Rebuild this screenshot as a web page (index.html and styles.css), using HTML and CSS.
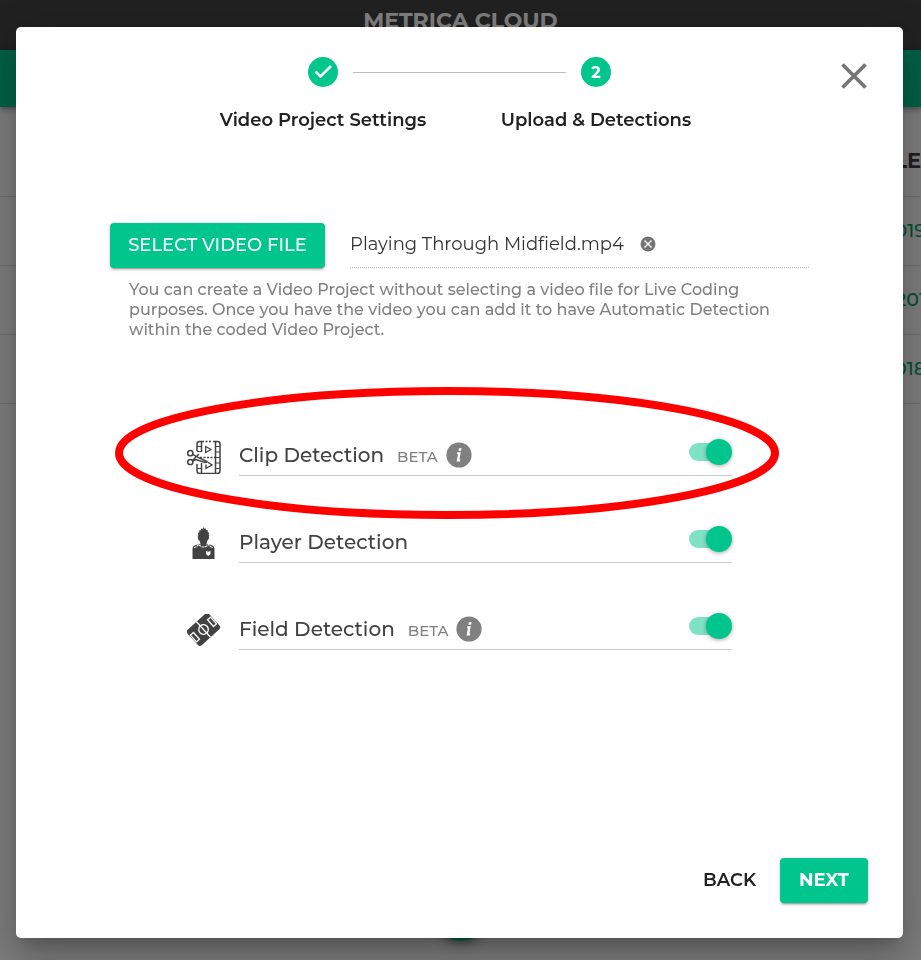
FILE: index.html
```html
<!DOCTYPE html>
<html lang="en">
<head>
<meta charset="utf-8">
<meta name="viewport" content="width=device-width, initial-scale=1">
<title>Metrica Cloud</title>
<link rel="stylesheet" href="styles.css">
</head>
<body>
<div class="page">
  <header class="brand">METRICA CLOUD</header>
  <div class="toolbar"></div>
  <table class="projects">
    <thead><tr><th>LE</th></tr></thead>
    <tbody>
      <tr><td>019</td></tr>
      <tr><td>201</td></tr>
      <tr><td>018</td></tr>
    </tbody>
  </table>
  <div class="page-foot"><span class="fab"></span></div>
</div>

<div class="overlay">
  <section class="dialog" role="dialog" aria-modal="true">
    <button class="close" type="button" aria-label="Close">
      <svg viewBox="0 0 28 28" width="28" height="28"><path d="M2.500 2.500l23 23M25.500 2.500l-23 23" stroke="#757575" stroke-width="3.800"/></svg>
    </button>

    <ol class="stepper">
      <li class="step">
        <span class="dot"><svg viewBox="0 0 30 30" width="30" height="30"><path d="M7.500 14.500l5 5L23 9" fill="none" stroke="#fff" stroke-width="2.500"/></svg></span>
        <span class="step-label">Video Project Settings</span>
      </li>
      <li class="step">
        <span class="dot">2</span>
        <span class="step-label">Upload &amp; Detections</span>
      </li>
    </ol>

    <div class="upload">
      <div class="file-row">
        <button class="btn btn-select" type="button">SELECT VIDEO FILE</button>
        <div class="file">
          <span class="file-name">Playing Through Midfield.mp4</span>
          <button class="clear" type="button" aria-label="Remove file">
            <svg viewBox="0 0 16 16" width="16" height="16"><circle cx="8" cy="8" r="7.500" fill="#757575"/><path d="M4.500 4.500l7 7M11.500 4.500l-7 7" stroke="#fff" stroke-width="1.300"/></svg>
          </button>
        </div>
      </div>
      <p class="help">You can create a Video Project without selecting a video file for Live Coding purposes. Once you have the video you can add it to have Automatic Detection within the coded Video Project.</p>
    </div>

    <div class="detections">
      <div class="detection">
        <svg class="icon" viewBox="0 0 34 34" width="34" height="34" fill="none" stroke="#424242" stroke-width="1.500">
          <path d="M10 11V4q0-2.500 2.500-2.500H17M26 1.500h4.500Q33 1.500 33 4v27q0 2.500-2.500 2.500h-18Q10 33.500 10 31v-7M14.500 2v10M14.500 23v10M28.500 2v31"/>
          <path d="M18.500 1.500H25" stroke-dasharray="2 1.500"/>
          <path d="M10 6.500h4.500M10 11.500h4.500M10 28.500h4.500M28.500 6.500H33M28.500 12H33M28.500 17.500H33M28.500 23H33M28.500 28.500H33" stroke-width="1.200"/>
          <path d="M13 17.500h15" stroke-dasharray="2 1.500"/>
          <path d="M18.700 6.500v6l5.300-3zM19 24.500v3.800l6-3.300-4.500-3" stroke-width="1.300"/>
          <circle cx="3.300" cy="13.200" r="2.600"/><circle cx="3.300" cy="22" r="2.600"/>
          <path d="M5.700 14.400L10 17l10 4.500q0 1-2 1L9 19.500l-3.500 1.700M5.900 20L12 14" stroke-width="1.400"/>
        </svg>
        <div class="field">
          <label for="clip">Clip Detection</label><span class="beta">BETA</span>
          <svg class="info" viewBox="0 0 26 26" width="26" height="26"><circle cx="13" cy="13" r="12.600" fill="#808080"/><path d="M13 6.300h2.600l-.5 2.500h-2.600zM11.300 10.300h3.500l-1.400 7.200h1l-.4 2h-3.400l1.400-7.200H11z" fill="#fff"/></svg>
          <input class="switch" id="clip" type="checkbox" checked>
        </div>
        <svg class="highlight" viewBox="0 0 664 132" width="664" height="132"><ellipse cx="332" cy="66" rx="328" ry="62" fill="none" stroke="#f00" stroke-width="8"/></svg>
      </div>

      <div class="detection">
        <svg class="icon" viewBox="0 0 34 34" width="34" height="34">
          <path d="M16.500 0l1 1.900 1.400-.7.300 1.800 1.700.3-.3 1.700 1.700.9-.7 1.700.9 1.300-.9.800.6.500q-.3 2.500-1.600 3l-1 3v2.500q-3 2.600-6.200 0V16.500l-1-3q-1.300-.5-1.600-3l.6-.5-.9-.8.900-1.300-.7-1.700 1.700-.9-.3-1.700 1.700-.3.300-1.800 1.400.7z" fill="#424242"/>
          <path d="M12.500 16.800L8 18.200q-2.500.8-2.500 3.500V32h22V21.700q0-2.700-2.500-3.500l-4.500-1.400q-4 5-8 0z" fill="#424242"/>
          <path d="M7 20.500q2.500-.2 4.500-3.200 5 5.500 10 0 2 3 4.500 3.200" fill="none" stroke="#fff" stroke-width="1.100" stroke-dasharray="2.500 .7"/>
          <path d="M19 24l2.200.7 2.300-.7v3l-2.300 2-2.200-2z" fill="#fff"/>
        </svg>
        <div class="field">
          <label for="player">Player Detection</label>
          <input class="switch" id="player" type="checkbox" checked>
        </div>
      </div>

      <div class="detection">
        <svg class="icon" viewBox="0 0 34 34" width="34" height="34">
          <g transform="rotate(-42 16.500 15.500)">
            <rect x="2" y="5" width="29" height="21" rx="3" fill="#424242"/>
            <g fill="none" stroke="#fff" stroke-width="1.300"><path d="M16.500 5v21M3 11h4v9H3zM30 11h-4v9h4z"/><circle cx="16.500" cy="15.500" r="4.800"/></g>
          </g>
        </svg>
        <div class="field">
          <label for="pitch">Field Detection</label><span class="beta">BETA</span>
          <svg class="info" viewBox="0 0 26 26" width="26" height="26"><circle cx="13" cy="13" r="12.600" fill="#808080"/><path d="M13 6.300h2.600l-.5 2.500h-2.600zM11.300 10.300h3.500l-1.400 7.200h1l-.4 2h-3.400l1.400-7.200H11z" fill="#fff"/></svg>
          <input class="switch" id="pitch" type="checkbox" checked>
        </div>
      </div>
    </div>

    <footer class="actions">
      <button class="btn-text" type="button">BACK</button>
      <button class="btn btn-next" type="button">NEXT</button>
    </footer>
  </section>
</div>
</body>
</html>
```
FILE: styles.css
```css
* { box-sizing: border-box; }

body {
  margin: 0;
  font-family: Montserrat, Inter, "Liberation Sans", sans-serif;
  color: #212121;
  background: #fafafa;
}

button { font: inherit; border: 0; background: none; padding: 0; cursor: pointer; }
svg { display: block; }

/* Page behind the dialog */
.page { display: flex; flex-direction: column; min-height: 100vh; overflow: hidden; }
.brand {
  height: 50px;
  padding-top: 6px;
  background: #424242;
  color: #fff;
  text-align: center;
  font-size: 22px;
  line-height: 30px;
  font-weight: 700;
}
.toolbar {
  height: 57px;
  background: #00c389;
  box-shadow: 0 2px 4px -1px rgba(0, 0, 0, .2), 0 4px 5px rgba(0, 0, 0, .14), 0 1px 10px rgba(0, 0, 0, .12);
}
.projects { width: calc(100% + 5px); border-collapse: collapse; text-align: right; }
.projects th, .projects td { padding: 0; height: 69px; border-bottom: 1px solid #d8d8d8; }
.projects th { height: 89px; padding: 18px 5px 0 0; font-size: 21px; font-weight: 700; color: #424242; }
.projects td { font-size: 19px; font-weight: 500; color: #00a06c; }
.page-foot {
  display: flex;
  justify-content: center;
  align-items: flex-start;
  height: 66px;
  margin-top: auto;
}
.fab {
  width: 56px;
  height: 47px;
  border-radius: 0 0 28px 28px;
  background: #00c389;
  box-shadow: 0 3px 5px -1px rgba(0, 0, 0, .2), 0 6px 10px rgba(0, 0, 0, .14), 0 1px 18px rgba(0, 0, 0, .12);
}

/* Dialog */
.overlay {
  position: fixed;
  inset: 0;
  display: flex;
  padding: 27px 18px 22px 16px;
  background: rgba(0, 0, 0, .5);
  overflow: auto;
}
.dialog {
  position: relative;
  flex: 1;
  display: flex;
  flex-direction: column;
  align-items: center;
  padding: 30px 35px 35px;
  border-radius: 5px;
  background: #fff;
  box-shadow: 0 11px 15px -7px rgba(0, 0, 0, .2), 0 24px 38px 3px rgba(0, 0, 0, .14), 0 9px 46px 8px rgba(0, 0, 0, .12);
}
.close { position: absolute; top: 35px; right: 35px; }

.stepper {
  display: grid;
  grid-template-columns: 1fr 1fr;
  width: 100%;
  max-width: 546px;
  margin: 0;
  padding: 0;
  list-style: none;
}
.step { position: relative; display: flex; flex-direction: column; align-items: center; gap: 23px; }
.step + .step::before {
  content: "";
  position: absolute;
  top: 15px;
  left: calc(-50% + 30px);
  right: calc(50% + 30px);
  border-top: 1px solid #bdbdbd;
}
.dot {
  display: grid;
  place-items: center;
  width: 30px;
  height: 30px;
  border-radius: 50%;
  background: #00c58c;
  color: #fff;
  font-size: 16px;
  font-weight: 700;
}
.step-label { font-size: 18px; line-height: 20px; font-weight: 600; white-space: nowrap; }

.upload { width: 100%; max-width: 699px; margin-top: 93px; }
.file-row { display: flex; gap: 25px; }
.btn {
  height: 45px;
  padding-bottom: 2px;
  border-radius: 4px;
  background: #00c58c;
  color: #fff;
  font-size: 18px;
  box-shadow: 0 3px 1px -2px rgba(0, 0, 0, .2), 0 2px 2px rgba(0, 0, 0, .14), 0 1px 5px rgba(0, 0, 0, .12);
}
.btn-select { width: 215px; font-weight: 500; }
.btn-next { width: 88px; font-weight: 700; }
.file {
  flex: 1;
  display: flex;
  align-items: center;
  gap: 16px;
  padding-bottom: 2px;
  border-bottom: 1px dotted #bdbdbd;
}
.file-name { font-size: 18px; color: #333; }
.help {
  margin: 12px 19px 0;
  color: #808080;
  font-size: 16px;
  line-height: 20px;
  font-weight: 500;
}

.detections {
  display: grid;
  gap: 43px;
  width: 100%;
  max-width: 545px;
  margin-top: 92px;
}
.detection { position: relative; display: flex; align-items: center; gap: 18px; }
.icon { flex: none; margin-top: 6px; }
.field {
  flex: 1;
  display: flex;
  align-items: center;
  height: 44px;
  border-bottom: 1px solid #ccc;
}
.field label { margin-top: 2px; font-size: 20px; font-weight: 500; color: #424242; }
.beta { margin: 5px 8px 0 13px; font-size: 15px; font-weight: 500; color: #808080; }
.info { margin-top: 2px; }
.switch {
  appearance: none;
  position: relative;
  width: 43px;
  height: 26px;
  margin: 0 0 4px auto;
}
.switch::before {
  content: "";
  position: absolute;
  top: 4px;
  left: 0;
  width: 38px;
  height: 18px;
  border-radius: 9px;
  background: #80e2c5;
}
.switch::after {
  content: "";
  position: absolute;
  top: 0;
  right: 0;
  width: 26px;
  height: 26px;
  border-radius: 50%;
  background: #00c58c;
  box-shadow: 0 1px 4px rgba(0, 0, 0, .35);
}
.highlight { position: absolute; top: -45px; left: -72px; pointer-events: none; }

.actions { display: flex; align-self: flex-end; align-items: center; gap: 24px; margin-top: auto; }
.btn-text { padding-bottom: 2px; font-size: 18px; font-weight: 600; color: #212121; }
```
